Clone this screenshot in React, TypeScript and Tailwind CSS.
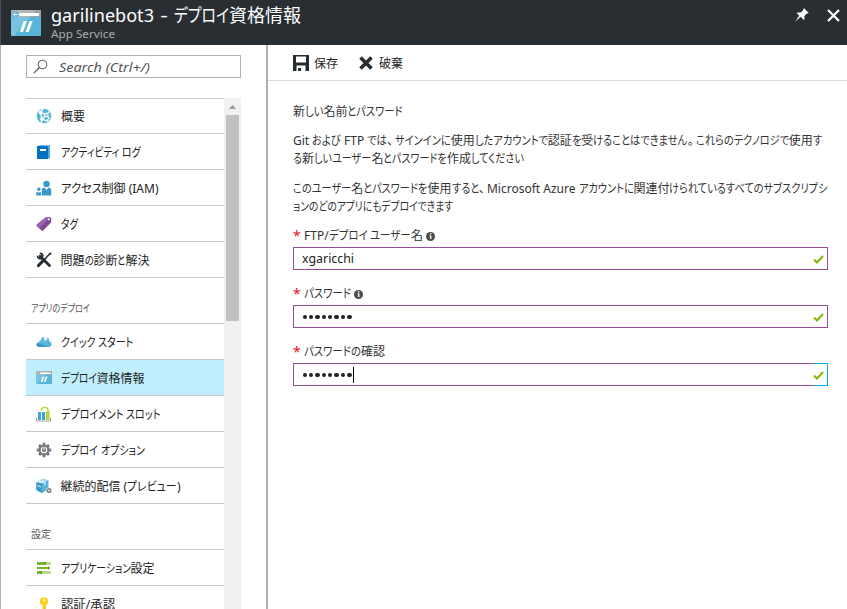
import { useLayoutEffect, useRef, useState } from "react";
import type { ReactNode } from "react";

const KANA = /([\u3040-\u30ff]+)/;
const SPLIT = /([\u3040-\u30ff]+|[\u3001\u3002])/;

/** One line of text whose kana are condensed until the line is `w` pixels wide. */
function T({ children, w, className = "" }: { children: string; w: number; className?: string }) {
  const ref = useRef<HTMLSpanElement>(null);
  const [fit, setFit] = useState<{ scale: number; widths: number[] } | null>(null);
  const runs = children.split(SPLIT).filter(Boolean);
  const hasKana = runs.some((r) => KANA.test(r));
  const flexible = runs.map((r) => !hasKana || KANA.test(r));
  useLayoutEffect(() => {
    const el = ref.current;
    if (!el || fit) return;
    const widths = Array.from(el.children).map((c) => c.getBoundingClientRect().width);
    const soft = widths.reduce((a, v, i) => a + (flexible[i] ? v : 0), 0);
    const hard = widths.reduce((a, v, i) => a + (flexible[i] ? 0 : v), 0);
    setFit({ scale: (w - hard) / soft, widths });
  });
  return (
    <span ref={ref} className={`inline-flex whitespace-pre ${className}`}>
      {runs.map((r, i) => (
        <span
          key={i}
          className={`block shrink-0 origin-left [font-feature-settings:'palt'] ${/[\u3001\u3002]/.test(r) ? "pr-[2px]" : ""}`}
          style={
            fit && flexible[i]
              ? { transform: `scaleX(${fit.scale})`, width: fit.widths[i], marginRight: fit.widths[i] * (fit.scale - 1) }
              : undefined
          }
        >
          {r}
        </span>
      ))}
    </span>
  );
}

const svg = "block h-4 w-4 shrink-0";

const Globe = () => (
  <svg viewBox="0 0 16 16" className={svg}>
    <circle cx="8" cy="8" r="7.3" fill="#59b4d9" />
    <path d="M4.500 4.500 10.500 7 6 11zM10.500 7l2.700-3.600M10.500 7l3 4M4.500 4.500 7 1M6 11l-1 4M6 11l5 2" fill="none" stroke="#fff" strokeWidth="1.300" />
    <g fill="#fff"><circle cx="4.500" cy="4.500" r="1.900" /><circle cx="10.300" cy="7" r="2.300" /><circle cx="6" cy="11" r="1.900" /><circle cx="11.500" cy="12.500" r="1.300" /></g>
    <circle cx="10.300" cy="7" r="1.100" fill="#59b4d9" />
  </svg>
);
const Book = () => (
  <svg viewBox="0 0 16 16" className={svg}>
    <path d="M3 1h11v12H3z" fill="#7fb9e8" />
    <path d="M1 2h11v13H1z" fill="#0072c6" />
    <path d="M12 2 14 1v13l-2 1z" fill="#59a4dc" />
    <path d="M4 5h6v2H4z" fill="#fff" />
  </svg>
);
const People = () => (
  <svg viewBox="0 0 16 16" className={svg}>
    <g fill="#3999c6">
      <circle cx="10.500" cy="4" r="3.200" />
      <path d="M5.800 15.500V9.700q0-2 2-2h.8l1.900 2.400 1.900-2.400h.8q2 0 2 2v5.800z" />
      <circle cx="2.800" cy="9.300" r="1.700" />
      <path d="M.3 15.500v-2.400q0-1.400 1.300-1.400l1.200 1.200L4 11.700q1 .1 1 1.400v2.400z" />
    </g>
  </svg>
);
const Tag = () => (
  <svg viewBox="0 0 16 16" className={svg}>
    <path d="M9.500 1.400 14 1l1.300 1.200-.3 4.200-7.800 8.100q-.8.700-1.600 0L.8 10q-.7-.8 0-1.500z" fill="#804998" />
    <path d="M9.500 1.400 14 1 3.300 12.400.8 10q-.7-.8 0-1.500z" fill="#9a65af" />
    <circle cx="12.800" cy="3.300" r="1.100" fill="#fff" />
  </svg>
);
const Tools = () => (
  <svg viewBox="0 0 16 16" className={svg}>
    <path d="M4 4.200 13.500 13.600" stroke="#262c30" strokeWidth="2.800" strokeLinecap="round" />
    <path d="M1 3.200 3 5.200 5 4.800 5.300 2.900 3.200.9Q6-.1 7.300 2.200q.7 1.700-.4 3.300L5.200 7.200Q3 7.800 1.600 6.400.3 5 1 3.200z" fill="#262c30" />
    <path d="M14.400 1.200 7.700 8.200" stroke="#262c30" strokeWidth="1.500" />
    <path d="M7.800 8 2.500 13.500" stroke="#262c30" strokeWidth="3.200" strokeLinecap="round" />
    <path d="m13 1.600 1.800-1 .8.800-1 1.800z" fill="#262c30" />
  </svg>
);
const Cloud = () => (
  <svg viewBox="0 0 16 16" className={svg}>
    <path d="M3 13Q.4 12.800.4 10.600.5 8.400 3 8.300 3 6.300 5 6.200q0-3 3.500-3.600 4.700-.3 4.600 4.600 2.600.6 2.500 3.100Q15.300 13 12.800 13z" fill="#59b4d9" />
    <path d="m8.500 1.500 3 0-1 2.600h1.500L8.300 8.500l1-3.100H7.500z" fill="#fff" />
    <path d="M3 13Q.4 12.800.4 10.600.5 9 1.700 8.500q1 2 3.500 1.600 2 1.600 5 1.200L11.500 13z" fill="#3999c6" />
  </svg>
);
function Window({ className = svg, detail = false }: { className?: string; detail?: boolean }) {
  return (
    <svg viewBox="0 0 30 26" preserveAspectRatio="none" className={className}>
      <rect width="30" height="26" rx="1" fill="#59b4d9" />
      <path d="M1 0h28q1 0 1 1v6H0V1q0-1 1-1z" fill="#a0a1a2" />
      <path d="M0 1q0-1 1-1h24L3 26H1q-1 0-1-1z" fill="#fff" opacity=".2" />
      <path d="M8 3h20v3H8z" fill="#fff" />
      {detail && <g><circle cx="4" cy="4.500" r="3.300" fill="#59b4d9" /><path d="M6.300 4.500H2.500M4.300 2.500 2.300 4.500l2 2" fill="none" stroke="#fff" /></g>}
      <path d="M12.800 11h3.200l-4 11H8.800zM18.500 11h3.200l-4 11h-3.200z" fill="#fff" />
    </svg>
  );
}
const Slots = () => (
  <svg viewBox="0 0 16 16" className={svg}>
    <path d="M.5 11.500V15h14v-3.500" fill="none" stroke="#a0a1a2" />
    <path d="M2 6h3v8H2zM6 6h3v8H6z" fill="#3da6d8" />
    <path d="M10 5h3.500v9H10z" fill="#b8d432" />
    <path d="M5 4.800Q5.300 1.400 8.700 1.400T12.300 5" fill="none" stroke="#b8d432" strokeWidth="1.300" />
  </svg>
);
const Gear = () => (
  <svg viewBox="0 0 16 16" className={svg}>
    <g stroke="#7a7a7a" strokeWidth="2.800"><path d="M8 .8v14.400M.8 8h14.400M3 3l10 10M13 3 3 13" /></g>
    <circle cx="8" cy="8" r="5.500" fill="#7a7a7a" />
    <circle cx="8" cy="8" r="2.700" fill="none" stroke="#fff" strokeWidth="1.100" />
    <path d="M8 4v4" stroke="#7a7a7a" strokeWidth="2.500" /><path d="M8 4.500V8" stroke="#fff" />
  </svg>
);
const Delivery = () => (
  <svg viewBox="0 0 16 16" className={svg}>
    <path d="m.4 4.500 6-3.400 6.100 1.200v9L6 15 .4 12z" fill="#59b4d9" />
    <path d="m.4 4.500 6-3.400 6.100 1.200L6 5.800z" fill="#a5daef" />
    <path d="m.4 4.500 5.600 1.300V15L.4 12z" fill="#3999c6" />
    <path d="m2.800 3.200 6.200 1.200v3" fill="none" stroke="#fff" />
    <path d="M1.500 7.500 5 9" stroke="#fff" />
    <circle cx="13" cy="12.500" r="3" fill="#fff" /><circle cx="13" cy="12.500" r="1.700" fill="none" stroke="#7a7a7a" strokeWidth="1.600" />
  </svg>
);
const Sliders = () => (
  <svg viewBox="0 0 16 16" className={svg}>
    <path d="M1 2h14v3H1zM1 7h14v2H1zM1 11h14v3H1z" fill="#b8d790" />
    <path d="M1 2h8v3H1zM1 7h11v2H1zM1 11h5v3H1z" fill="#76b82a" />
    <path d="M9 2h1v3H9zM12 6.500h1v3h-1zM5 11h1v3H5z" fill="#5c8f25" />
  </svg>
);
const Key = () => (
  <svg viewBox="0 0 16 16" className={svg}>
    <path d="M8 1.500q4.200.1 4.300 4Q12.200 8.200 9.500 9.500V15L8 16.500 6.500 15V9.500Q3.800 8.200 3.700 5.500 3.800 1.600 8 1.500z" fill="#fcd116" />
    <circle cx="8" cy="4.300" r="1.200" fill="#fff" /><path d="M9 10v5" stroke="#d9a900" strokeWidth=".8" />
  </svg>
);

function Row({ icon, text, w, active = false, first = false }: { icon: ReactNode; text: string; w: number; active?: boolean; first?: boolean }) {
  return (
    <div className={`flex shrink-0 items-center gap-[9px] border-b border-[#c8c8c8] pl-[9.500px] ${first ? "h-[35px]" : "h-9"} ${active ? "bg-[#bfeffc]" : ""}`}>
      {icon}
      <T w={w} className="pt-[2px] leading-[18px] text-[#222]">{text}</T>
    </div>
  );
}
function Section({ text, w }: { text: string; w: number }) {
  return (
    <div className="flex h-[46px] shrink-0 items-end border-b border-[#c8c8c8] pb-[6px] pl-[5px]">
      <T w={w} className="text-[10px] leading-[18px] text-[#555]">{text}</T>
    </div>
  );
}

const Info = () => (
  <svg viewBox="0 0 9 9" className="ml-[3px] block h-[9px] w-[9px]">
    <circle cx="4.500" cy="4.500" r="4.500" fill="#4c4c4c" />
    <path d="M4 1.300h1.500v1.300H4zM3.300 3.500h2.100V7H4V4.300h-.7z" fill="#fff" />
  </svg>
);

function Field({ label, w, info = false, focused = false, children }: { label: string; w: number; info?: boolean; focused?: boolean; children: ReactNode }) {
  return (
    <div className="flex h-[58px] flex-col">
      <div className="flex h-[20px] items-center pb-[2px]">
        <span className="w-[11px] text-[14px] leading-[18px] text-[#e81123]">*</span>
        <T w={w} className="leading-[18px] text-[#333]">{label}</T>
        {info && <Info />}
      </div>
      <div className="relative flex h-[23px] items-center justify-between border border-[#954f98] pr-[3px] pl-2 text-[#222]">
        {children}
        {focused && <span className="absolute -top-px -right-px h-[23px] w-[14px] border-y border-r border-[#00b0e8]" />}
        <svg viewBox="0 0 11 9" className="mt-px block h-[9px] w-[11px]"><path d="m1 4.500 3 3L10 1" fill="none" stroke="#7fba00" strokeWidth="2" /></svg>
      </div>
    </div>
  );
}

function Dots({ caret = false }: { caret?: boolean }) {
  return (
    <span className="flex h-[17px] items-center gap-[2px] pl-[0.500px]">
      {Array.from({ length: 8 }, (_, i) => <i key={i} className="mt-px block h-[4.400px] w-[4.400px] rounded-full bg-[#222]" />)}
      {caret && <i className="-ml-px block h-4 w-px bg-black" />}
    </span>
  );
}

export default function App() {
  return (
    <div className="flex h-[609px] w-[847px] flex-col overflow-hidden bg-white font-['Noto_Sans','Noto_Sans_CJK_JP',sans-serif] text-[12px] text-[#222]">
      <header className="flex h-[45px] shrink-0 border-l border-[#4a4e52] bg-[#292e32] text-white">
        <Window detail className="mt-[10px] ml-[10px] block h-[26px] w-[30px]" />
        <div className="ml-[10px] flex flex-1 flex-col items-start">
          <div className="flex h-[26px] items-center pt-[3px] text-[18px] leading-[26px]">
            <T w={103}>garilinebot3</T>
            <T w={20}> - </T>
            <T w={127}>デプロイ資格情報</T>
          </div>
          <T w={64} className="mt-px text-[11px] leading-[14px] text-[#a8abad]">App Service</T>
        </div>
        <svg viewBox="0 0 14 14" className="mt-2 mr-[18px] block h-[14px] w-[14px]">
          <path d="m9 .3 4.700 4.500-1 .8-.9-.2-2.400 2.500.1 3-.9.9-3-3L.3 13.700 4.200 7.500 1.700 5.300l.9-.9 3.100.2 2.600-2.500-.2-.9z" fill="#fff" />
        </svg>
        <svg viewBox="0 0 13 13" className="mt-[9px] mr-[7px] block h-[13px] w-[13px]"><path d="m1 1 11 11M12 1 1 12" stroke="#fff" strokeWidth="2.200" /></svg>
      </header>
      <div className="flex min-h-0 flex-1 border-l border-[#b0b0b0]">
        <aside className="flex w-[267px] shrink-0 flex-col border-r-2 border-[#b0b0b0] pl-[25px]">
          <div className="mt-[10px] flex h-[23px] w-[215px] shrink-0 items-center border border-[#b0b0b0] pl-[6px]">
            <svg viewBox="0 0 16 16" className="block h-4 w-4"><circle cx="9.500" cy="5.500" r="4.300" fill="none" stroke="#666" strokeWidth="1.100" /><path d="M6.400 8.500.8 14.200" stroke="#555" strokeWidth="1.200" /></svg>
            <T w={91} className="ml-[10px] text-[13px] leading-[18px] text-[#555] italic">Search (Ctrl+/)</T>
          </div>
          <div className="mt-5 flex min-h-0 w-[215px] flex-1">
            <nav className="flex w-[198px] flex-col overflow-hidden border-t border-[#c8c8c8]">
              <Row first icon={<Globe />} text="概要" w={24} />
              <Row icon={<Book />} text="アクティビティ ログ" w={80} />
              <Row icon={<People />} text="アクセス制御 (IAM)" w={98} />
              <Row icon={<Tag />} text="タグ" w={17} />
              <Row icon={<Tools />} text="問題の診断と解決" w={89} />
              <Section text="アプリのデプロイ" w={59} />
              <Row icon={<Cloud />} text="クイック スタート" w={73} />
              <Row active icon={<Window className="block h-[13px] w-4 shrink-0" />} text="デプロイ資格情報" w={84} />
              <Row icon={<Slots />} text="デプロイメント スロット" w={100} />
              <Row icon={<Gear />} text="デプロイ オプション" w={84} />
              <Row icon={<Delivery />} text="継続的配信 (プレビュー)" w={120} />
              <Section text="設定" w={20} />
              <Row icon={<Sliders />} text="アプリケーション設定" w={94} />
              <Row icon={<Key />} text="認証/承認" w={54} />
            </nav>
            <div className="flex w-[17px] flex-col items-center bg-[#f1f1f1]">
              <svg viewBox="0 0 17 17" className="block h-[17px] w-[17px] shrink-0"><path d="M5 11h7L8.500 7z" fill="#999" /></svg>
              <div className="h-[206px] w-[13px] bg-[#c1c1c1]" />
            </div>
          </div>
        </aside>
        <main className="flex min-w-0 flex-1 flex-col">
          <div className="flex h-9 shrink-0 items-center border-b border-[#dcdcdc] pl-[25px]">
            <svg viewBox="0 0 16 16" className="block h-4 w-4"><path fillRule="evenodd" d="M0 0h16v16H0zM3 1.500v6h10v-6zM3.500 10.500V16H5v-3h3v3h4.500v-5.500z" fill="#262c30" /></svg>
            <T w={24} className="ml-[5px] pt-[2px] leading-[18px]">保存</T>
            <svg viewBox="0 0 14 14" className="ml-[21px] block h-[14px] w-[14px]"><path d="m1.500 1.500 11 11M12.500 1.500l-11 11" stroke="#262c30" strokeWidth="3.600" /></svg>
            <T w={24} className="ml-[6px] pt-[2px] leading-[18px]">破棄</T>
          </div>
          <div className="flex w-[560px] flex-col pl-[25px] leading-[18px] text-[#333]">
            <div className="mt-[22px] h-[18px]"><T w={110}>新しい名前とパスワード</T></div>
            <div className="mt-[11px] flex h-9 flex-col items-start">
              <T w={529}>Git および FTP では、サインインに使用したアカウントで認証を受けることはできません。これらのテクノロジで使用す</T>
              <T w={231}>る新しいユーザー名とパスワードを作成してください</T>
            </div>
            <div className="mt-3 flex h-9 flex-col items-start">
              <T w={535}>このユーザー名とパスワードを使用すると、Microsoft Azure アカウントに関連付けられているすべてのサブスクリプシ</T>
              <T w={160}>ョンのどのアプリにもデプロイできます</T>
            </div>
            <div className="mt-[11px] w-[535px]">
              <Field label="FTP/デプロイ ユーザー名" w={119} info><T w={52}>xgaricchi</T></Field>
              <Field label="パスワード" w={47} info><Dots /></Field>
              <Field label="パスワードの確認" w={81} focused><Dots caret /></Field>
            </div>
          </div>
        </main>
      </div>
    </div>
  );
}
